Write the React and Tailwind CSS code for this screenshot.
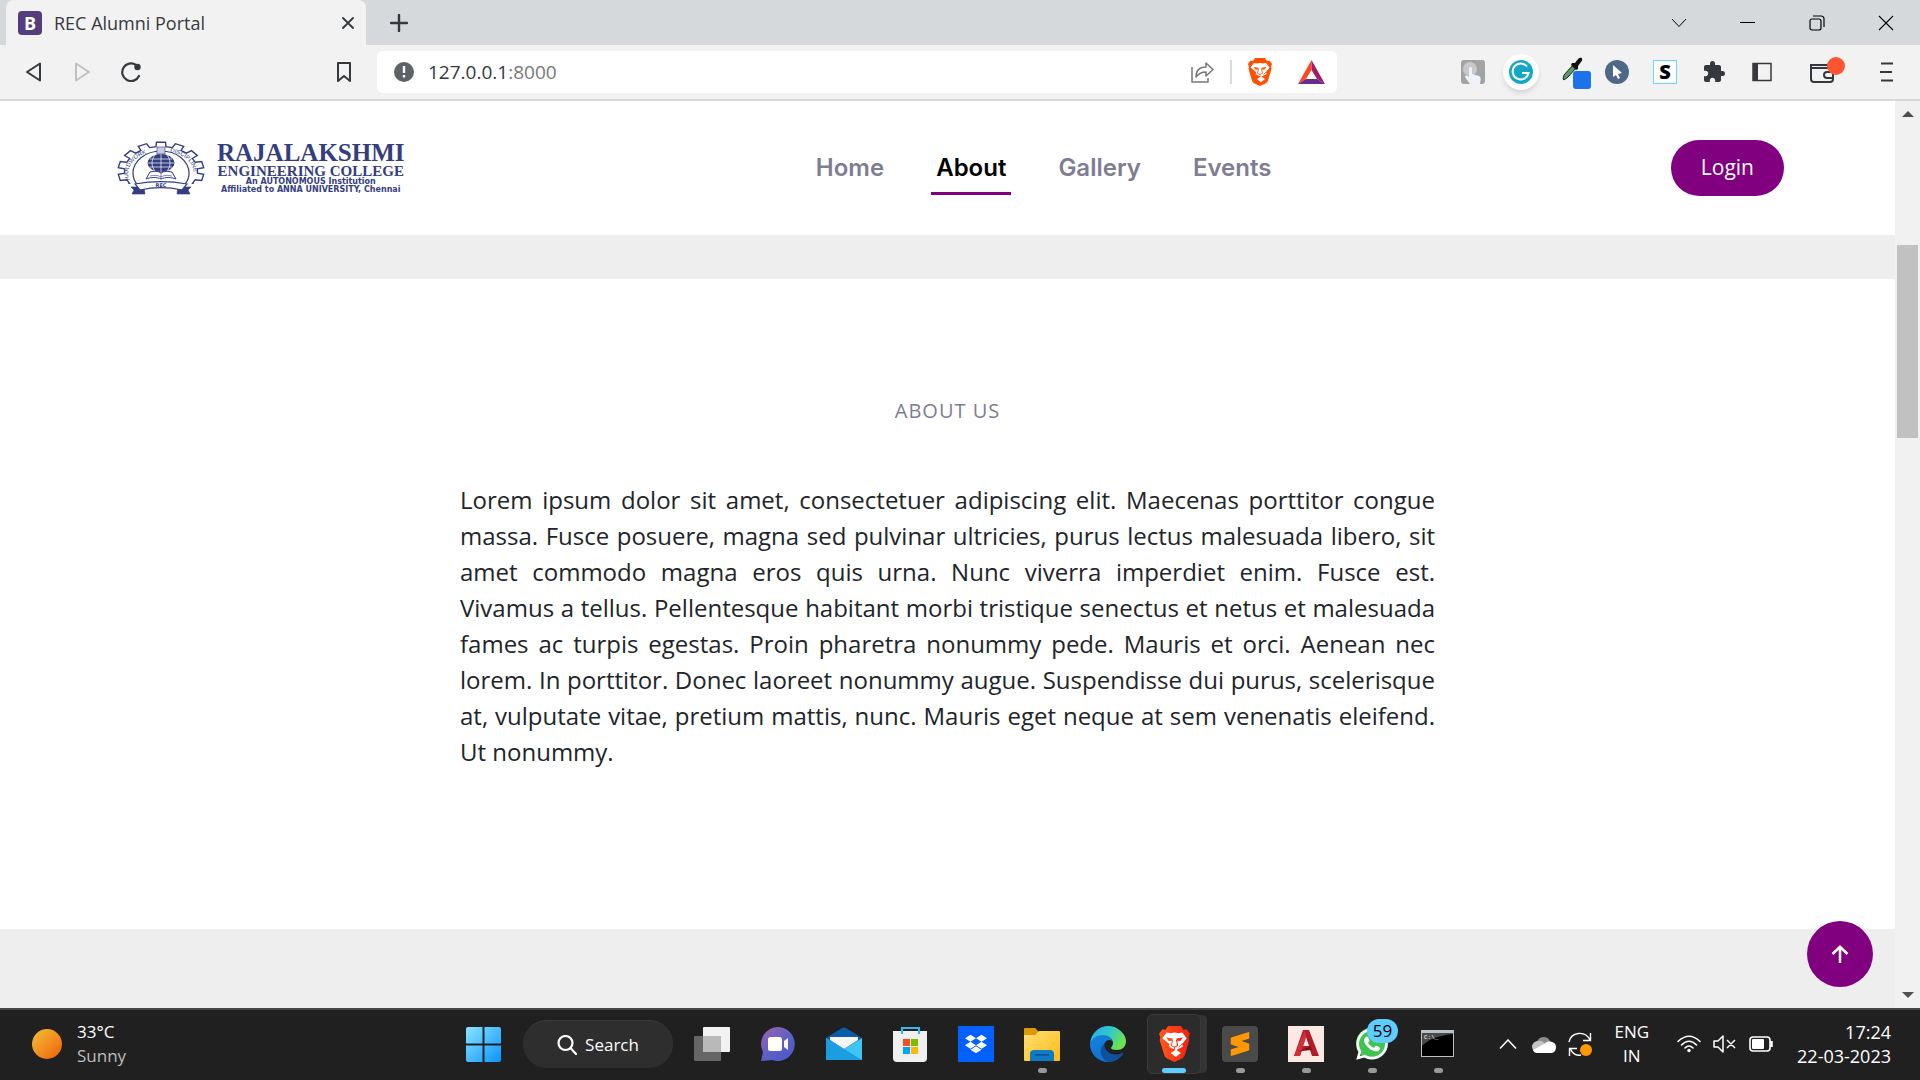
import { SiSublimetext, SiDropbox } from "react-icons/si";
import { FaWhatsapp } from "react-icons/fa";
import { MdExtension } from "react-icons/md";

const GEAR_TEETH = 14;

function gearPath() {
  const pts = [];
  const step = (Math.PI * 2) / GEAR_TEETH;
  for (let i = 0; i < GEAR_TEETH; i++) {
    const mid = -Math.PI / 2 + i * step;
    [
      [-0.3, 0.85],
      [-0.24, 1],
      [0.24, 1],
      [0.3, 0.85],
    ].forEach(([o, r]) => {
      const a = mid + o * step;
      pts.push(`${(44 + Math.cos(a) * 43 * r).toFixed(1)} ${(30 + Math.sin(a) * 29 * r).toFixed(1)}`);
    });
  }
  return `M${pts.join("L")}Z`;
}

function CollegeCrest() {
  return (
    <svg viewBox="0 0 88 54" className="h-[54px] w-[88px] shrink-0" fill="none" stroke="#343d80" aria-hidden="true">
      <defs>
        <clipPath id="crest-top">
          <path d="M0 0H88V43H0Z" />
        </clipPath>
        <path id="arc-left" d="M13 39A31 21.500 0 0 1 36 11" />
        <path id="arc-right" d="M53 11A31 21.500 0 0 1 75 39" />
      </defs>
      <g clipPath="url(#crest-top)">
        <path d={gearPath()} strokeWidth="1.400" />
        <ellipse cx="44" cy="32" rx="28" ry="22" strokeWidth="1.200" />
      </g>
      <g fill="#343d80" stroke="none" fontFamily="Liberation Sans" fontSize="6">
        <text><textPath href="#arc-left">HARDWORK</textPath></text>
        <text><textPath href="#arc-right">DISCIPLINE</textPath></text>
      </g>
      <path d="M40 6h8v7h-8z" fill="#c9cce0" strokeWidth=".6" />
      <ellipse cx="44" cy="22" rx="13" ry="8.500" fill="#343d80" />
      <path d="M31 22h26M33 18h22M33 26h22M44 13v18M38 14c-4 5-4 11 0 16M50 14c4 5 4 11 0 16" stroke="#fff" strokeWidth=".7" />
      <path d="M29 38l4-7c4-1 8-1 11 1 3-2 7-2 11-1l4 7c-5-2-11-2-15 0-4-2-10-2-15 0z" fill="#fff" strokeWidth="1" />
      <path d="M33 35c4-1 8-1 11 1 3-2 7-2 11-1M44 32v6" strokeWidth=".6" />
      <path d="M27 46H14l3 3-2 4h13zM61 46h13l-3 3 2 4H60z" fill="#343d80" strokeWidth=".6" />
      <path d="M18 43c16-3 36-3 52 0l-5 6c-13-3-29-3-42 0z" fill="#fff" strokeWidth="1.200" />
      <text x="44" y="46" textAnchor="middle" fill="#343d80" stroke="none" fontFamily="DejaVu Sans" fontWeight="700" fontSize="5">REC</text>
    </svg>
  );
}

function BraveLion({ className, fill }) {
  return (
    <svg viewBox="0 0 24 28" className={className}>
      <defs>
        <linearGradient id="lion-red"><stop stopColor="#ff5a1c" /><stop offset="1" stopColor="#f51e0f" /></linearGradient>
      </defs>
      <path d="M7 0h10l2 3 2.500-.5L24 6l-1 3 .5 2-3 10c-.5 2-1 3-3 4.500L12 28l-5.500-2.500C4.500 24 4 23 3.500 21L.5 11 1 9 0 6l2.500-3.500L5 3z" fill={fill} />
      <path d="M6 5l3 .6 3-.6 3 .6 3-.6 3.500 4.500-3.500 4.500.5 2.200-4.500 2v.8l3 2-4 3.200-4-3.200 3-2v-.8l-4.500-2 .5-2.200L2.500 9.500z" fill="#fff" />
      <path d="M5.500 9l5 .8v1.600l-3 .2zM18.500 9l-5 .8v1.600l3 .2z" fill={fill} />
      <path d="M10.500 11l-1 4.200 2.500 1.300 2.500-1.300-1-4.200" fill="none" stroke={fill} strokeWidth=".8" />
      <path d="M5.500 13.500l3 3M18.500 13.500l-3 3M12 16.500v2.500" stroke={fill} strokeWidth=".7" />
    </svg>
  );
}

function BrowserTabs() {
  return (
    <div className="flex h-[45px] items-center bg-[#d5d9dc] pl-1.5">
      <div className="flex h-full w-[360px] items-center rounded-t-lg bg-[#f2f2f2] pl-3 pr-3">
        <span className="flex size-6 items-center justify-center rounded bg-[#563d7c] text-lg font-bold leading-6 text-white" aria-hidden="true">B</span>
        <span className="ml-3 flex-1 text-lg text-[#35393d]">REC Alumni Portal</span>
        <button aria-label="Close tab" className="text-[#35393d]">
          <svg viewBox="0 0 12 12" className="size-3" stroke="currentColor" strokeWidth="1.800" strokeLinecap="round"><path d="M1 1l10 10M11 1L1 11" /></svg>
        </button>
      </div>
      <button aria-label="New tab" className="ml-6 text-[#35393d]">
        <svg viewBox="0 0 18 18" className="size-[18px]" stroke="currentColor" strokeWidth="2.400" strokeLinecap="round"><path d="M9 1v16M1 9h16" /></svg>
      </button>
      <div className="ml-auto flex items-center text-black">
        <button aria-label="Search tabs" className="flex w-[69px] justify-center">
          <svg viewBox="0 0 16 10" className="h-2.5 w-4" fill="none" stroke="currentColor"><path d="M1 1l7 7.500L15 1" /></svg>
        </button>
        <button aria-label="Minimize" className="flex w-[69px] justify-center">
          <svg viewBox="0 0 16 2" className="h-0.5 w-4" fill="currentColor"><path d="M0 0h15v1H0z" /></svg>
        </button>
        <button aria-label="Restore" className="flex w-[69px] justify-center">
          <svg viewBox="0 0 16 16" className="size-4" fill="none" stroke="currentColor" strokeWidth="1.200"><rect x="1" y="4" width="11" height="11" rx="2" /><path d="M4 1h8c2 0 3 1 3 3v8" /></svg>
        </button>
        <button aria-label="Close window" className="flex w-[69px] justify-center">
          <svg viewBox="0 0 16 16" className="size-4" stroke="currentColor" strokeWidth="1.100"><path d="M1 1l14 14M15 1L1 15" /></svg>
        </button>
      </div>
    </div>
  );
}

function BrowserToolbar() {
  return (
    <div className="flex h-14 items-center border-b-2 border-[#d5d9dc] bg-[#f2f2f2] text-[#35393d]">
      <div className="flex w-[377px] items-center pl-6 pr-6">
        <button aria-label="Back">
          <svg viewBox="0 0 20 20" className="size-5" fill="none" stroke="currentColor" strokeWidth="2" strokeLinejoin="round"><path d="M16 1.500v17L3 10z" /></svg>
        </button>
        <button aria-label="Forward" className="ml-7 text-[#bfc1c3]">
          <svg viewBox="0 0 20 20" className="size-5" fill="none" stroke="currentColor" strokeWidth="2" strokeLinejoin="round"><path d="M4 1.500v17L17 10z" /></svg>
        </button>
        <button aria-label="Reload" className="ml-7">
          <svg viewBox="0 0 22 20" className="h-5 w-[22px]" fill="none" stroke="currentColor" strokeWidth="2.200" strokeLinecap="round"><path d="M16 3A8.800 8.800 0 1 0 19 14" /><circle cx="17.500" cy="5" r="3.200" fill="currentColor" stroke="none" /></svg>
        </button>
        <button aria-label="Bookmark this page" className="ml-auto">
          <svg viewBox="0 0 18 20" className="h-5 w-[18px]" fill="none" stroke="currentColor" strokeWidth="2" strokeLinejoin="round"><path d="M3 1h12v18l-6-5-6 5z" /></svg>
        </button>
      </div>
      <div className="flex h-[42px] w-1/2 items-center rounded-md bg-white pl-[17px] pr-3">
        <svg viewBox="0 0 20 20" className="size-5" aria-hidden="true"><circle cx="10" cy="10" r="10" fill="#5f6368" /><path d="M8.800 4h2.400v7H8.800zM8.800 13h2.400v2.400H8.800z" fill="#fff" /></svg>
        <span className="ml-3.5 text-[19px] text-[#35393d]">127.0.0.1<span className="text-[#777]">:8000</span></span>
        <button aria-label="Share" className="ml-auto">
          <svg viewBox="0 0 24 22" className="h-[22px] w-6" fill="none" stroke="#777" strokeWidth="1.500" strokeLinejoin="round"><path d="M2 6v15h16v-4" /><path d="M6 16c0-7 4-10 10-10V2l7 6.500-7 6.500v-4c-4 0-7 1-10 5z" /></svg>
        </button>
        <span className="ml-4 h-6 w-0.5 bg-[#ddd]" />
        <button aria-label="Brave Shields" className="ml-4">
          <BraveLion className="h-7 w-6" fill="#ff5000" />
        </button>
        <button aria-label="Brave Rewards" className="ml-[26px]">
          <svg viewBox="0 0 27 24" className="h-6 w-[27px]"><path d="M13.500 0L0 24l8-5 5.500-9z" fill="#ff4724" /><path d="M13.500 0L27 24l-8-5-5.500-9z" fill="#9e1f63" /><path d="M0 24h27l-8-5H8z" fill="#662d91" /></svg>
        </button>
      </div>
      <div className="ml-auto flex items-center pr-[26px]">
        <button aria-label="Tap extension">
          <svg viewBox="0 0 24 24" className="size-6"><rect width="24" height="24" rx="3" fill="#a3a3a3" /><circle cx="9" cy="9" r="7" fill="#c9c9c9" /><path d="M8 9c0-3 3-3 3 0v5l7 2c2 1 2 3 1 8H9l-5-7c0-2 2-2 4 0z" fill="#eef3fa" /></svg>
        </button>
        <button aria-label="Grammarly" className="ml-[18px] flex size-9 items-center justify-center rounded-full bg-white shadow-md">
          <svg viewBox="0 0 24 24" className="size-6"><circle cx="12" cy="12" r="12" fill="#14a8c4" /><path d="M18 6.500A8 8 0 1 0 19.500 13H13" fill="none" stroke="#fff" strokeWidth="2" /></svg>
        </button>
        <button aria-label="Color picker" className="ml-[22px]">
          <svg viewBox="0 0 32 34" className="h-[34px] w-8"><path d="M2 24l1-4 9-10 3 3-8 9-4 3z" fill="#5c9b62" stroke="#222" /><path d="M11 8l3 0 3-4c3-3 6 0 3 3l-3 4 0 3-2 1-5-5z" fill="#111" /><rect x="12" y="16" width="18" height="18" rx="3" fill="#1a73e8" /></svg>
        </button>
        <button aria-label="Cursor extension" className="ml-3">
          <svg viewBox="0 0 24 24" className="size-6"><circle cx="12" cy="12" r="12" fill="#4f6788" /><path d="M8 5l9 8-4 1 2 4-2 1-2-4-3 2z" fill="#fff" /></svg>
        </button>
        <button aria-label="S extension" className="ml-6 flex size-6 items-center justify-center border border-[#6fd3f7] bg-white text-xl font-extrabold leading-5 text-black">S</button>
        <button aria-label="Extensions" className="ml-[25px]"><MdExtension size={24} /></button>
        <button aria-label="Sidebar" className="ml-[26px]">
          <svg viewBox="0 0 20 20" className="size-5"><path fill="none" stroke="currentColor" strokeWidth="1.500" d="M1 1.500h18v17H1z" /><path d="M1 1h5v18H1z" fill="currentColor" /></svg>
        </button>
        <button aria-label="Wallet" className="ml-[37px]">
          <svg viewBox="0 0 36 30" className="h-[30px] w-9" fill="none" stroke="currentColor" strokeWidth="2"><path d="M2 8h19c2 0 3 1 3 3v11c0 2-1 3-3 3H5c-2 0-3-1-3-3zM2 11h20M24 15h-6c-4 0-4 6 0 6h6" /><circle cx="27" cy="9" r="9" fill="#ff5530" stroke="none" /></svg>
        </button>
        <button aria-label="Menu" className="ml-[35px]">
          <svg viewBox="0 0 14 20" className="h-5 w-3.5" stroke="currentColor" strokeWidth="2"><path d="M1 1.500h12M0 10h12M1 18.500h12" /></svg>
        </button>
      </div>
    </div>
  );
}

const NAV = ["Home", "About", "Gallery", "Events"];

function SiteHeader() {
  return (
    <header className="flex h-[134px] items-center justify-between bg-white pl-[117px] pr-[111px]">
      <a href="#home" className="flex items-center gap-3 text-[#343d80]">
        <CollegeCrest />
        <span className="flex flex-col items-center whitespace-nowrap font-['Liberation_Serif',serif] font-bold">
          <span className="text-[25px] leading-[22px]">RAJALAKSHMI</span>
          <span className="text-[15px] leading-[14px]">ENGINEERING COLLEGE</span>
          <span className="font-['DejaVu_Sans',sans-serif] text-[8px] leading-2">An AUTONOMOUS Institution</span>
          <span className="font-['DejaVu_Sans',sans-serif] text-[8px] leading-2">Affiliated to ANNA UNIVERSITY, Chennai</span>
        </span>
      </a>
      <nav className="flex gap-[42px] pl-3 font-['Inter',sans-serif] text-2xl font-semibold leading-8">
        {NAV.map((item) => (
          <a
            key={item}
            href={`#${item.toLowerCase()}`}
            className={item === "About" ? "border-b-[3px] border-[#800080] px-[5px] pb-2 pt-[11px] text-black" : "border-b-[3px] border-transparent px-[5px] pb-2 pt-[11px] text-[#7f7d92]"}
          >
            {item}
          </a>
        ))}
      </nav>
      <button className="h-14 rounded-full bg-[#800080] px-[30px] text-[21px] text-white">Login</button>
    </header>
  );
}

function Scrollbar() {
  return (
    <div className="flex w-[25px] shrink-0 flex-col items-center justify-between bg-[#f1f1f1] py-2.5" aria-hidden="true">
      <svg viewBox="0 0 12 6" className="h-1.5 w-3" fill="#505050"><path d="M6 0l6 6H0z" /></svg>
      <div className="mt-32 mb-auto h-[193px] w-[21px] bg-[#c1c1c1]" />
      <svg viewBox="0 0 12 6" className="h-1.5 w-3" fill="#505050"><path d="M0 0h12L6 6z" /></svg>
    </div>
  );
}

function TaskIcon({ label, running, active, children }) {
  return (
    <button aria-label={label} className={active ? "relative flex h-[60px] w-[54px] flex-col items-center rounded-md border border-[#3a3a3a] bg-[#2c2c2c] pt-[11px] shadow-[7px_0_0_-1px_#343434]" : "relative flex h-[60px] w-[54px] flex-col items-center pt-3"}>
      {children}
      {running && <span className={active ? "mt-1.5 h-[5px] w-6 rounded-full bg-[#60cdff]" : "mt-1.5 h-[5px] w-[9px] rounded-full bg-[#999]"} />}
    </button>
  );
}

function Taskbar() {
  return (
    <footer className="flex h-[72px] items-center border-t-2 border-[#444] bg-[#202020] pb-0.5 text-[17px] leading-6 text-white">
      <div className="flex flex-1 items-center gap-[15px] pl-8">
        <span className="size-[30px] rounded-full bg-linear-to-br from-[#efc034] to-[#f05a08]" />
        <div>
          <p>33°C</p>
          <p className="text-[#bdbdbd]">Sunny</p>
        </div>
      </div>
      <div className="flex items-center gap-3 pl-2">
        <button aria-label="Start" className="mr-2.5">
          <svg viewBox="0 0 35 35" className="size-[35px]">
            <defs><linearGradient id="win" x2="1" y2="1" gradientUnits="objectBoundingBox"><stop stopColor="#8ae4ff" /><stop offset="1" stopColor="#0a94ff" /></linearGradient></defs>
            <path d="M2 0h14.500v16.500H0V2q0-2 2-2zM18.500 0H33q2 0 2 2v14.500H18.500zM0 18.500h16.500V35H2q-2 0-2-2zM18.500 18.500H35V33q0 2-2 2H18.500z" fill="url(#win)" />
          </svg>
        </button>
        <button className="flex h-12 w-[150px] items-center justify-center gap-2 rounded-full border-t border-[#3b3b3b] bg-[#2e2e2e]">
          <svg viewBox="0 0 20 20" className="size-5" fill="none" stroke="currentColor" strokeWidth="2.200" strokeLinecap="round"><circle cx="8.500" cy="8" r="7" /><path d="M13.500 13l5.500 6" /></svg>
          Search
        </button>
        <TaskIcon label="Task View">
          <svg viewBox="0 0 36 36" className="size-9"><rect x="9" y="1" width="27" height="25" rx="1" fill="#f2f2f2" /><rect y="10" width="27" height="25" rx="1" fill="#666" /><path d="M9 10h18v16H9z" fill="#b9b9b9" /></svg>
        </TaskIcon>
        <TaskIcon label="Chat">
          <svg viewBox="0 0 36 36" className="size-9">
            <defs><linearGradient id="chat" x1=".2" y1=".1" x2=".8" y2=".9"><stop stopColor="#8b62b5" /><stop offset=".6" stopColor="#5b5fc7" /><stop offset="1" stopColor="#5059c9" /></linearGradient></defs>
            <path d="M18 1a17 17 0 1 1-6 33L1 35l2-9A17 17 0 0 1 18 1z" fill="url(#chat)" />
            <rect x="8" y="11" width="14" height="14" rx="2.500" fill="#fff" /><path d="M24 15l4-3v12l-4-3z" fill="#fff" />
          </svg>
        </TaskIcon>
        <TaskIcon label="Mail">
          <svg viewBox="0 0 36 36" className="size-9"><path d="M0 12L16 2q2-1 4 0l16 10-18 13z" fill="#0a5ba8" /><path d="M4 11h28v3L18 23 4 14z" fill="#f5f5f5" /><path d="M0 12l18 11L36 12v22H0z" fill="#3ec6f3" /><path d="M0 12l36 22H0z" fill="#1b9de2" /></svg>
        </TaskIcon>
        <TaskIcon label="Microsoft Store">
          <svg viewBox="0 0 36 36" className="size-9"><path d="M1 5h34v27q0 4-4 4H5q-4 0-4-4z" fill="#f0f0f0" /><path d="M10 8V2h17v6" fill="none" stroke="#35b6ee" strokeWidth="2.200" /><path d="M11 13h7v7h-7z" fill="#f25022" /><path d="M19 13h7v7h-7z" fill="#7fba00" /><path d="M11 21h7v7h-7z" fill="#00a4ef" /><path d="M19 21h7v7h-7z" fill="#ffb900" /></svg>
        </TaskIcon>
        <TaskIcon label="Dropbox">
          <span className="flex size-9 items-center justify-center bg-[#0061fe]"><SiDropbox size={22} color="#fff" /></span>
        </TaskIcon>
        <TaskIcon label="File Explorer" running>
          <svg viewBox="0 0 36 36" className="size-9">
            <defs><linearGradient id="folder" x2="1" y2="1"><stop stopColor="#ffdf75" /><stop offset="1" stopColor="#fbbc14" /></linearGradient></defs>
            <path d="M0 3q0-1 1-1h10l4 4v4H0z" fill="#dc9a05" /><path d="M0 9h11l4-4h20q1 0 1 1v28q0 1-1 1H1q-1 0-1-1z" fill="url(#folder)" /><path d="M6 35v-7q0-4 4-4h16q4 0 4 4v7z" fill="#0f7ac6" /><path d="M11 29h14" stroke="#0a4f8c" strokeWidth="1.500" />
          </svg>
        </TaskIcon>
        <TaskIcon label="Microsoft Edge">
          <svg viewBox="0 0 36 36" className="size-9">
            <defs>
              <linearGradient id="edge-a" x2="1" y2=".5"><stop stopColor="#2aa7ee" /><stop offset=".5" stopColor="#30c6cf" /><stop offset="1" stopColor="#6be24f" /></linearGradient>
              <linearGradient id="edge-b" x2=".6" y2="1"><stop stopColor="#1583e0" /><stop offset="1" stopColor="#0d6fd0" /></linearGradient>
            </defs>
            <path d="M0 18C1 7 9 0 18 0c10 0 18 8 18 15 0 6-4 9-9 9-4 0-6-1-6-2s2-2 2-5c0-4-4-7-9-7C7 10 2 13 0 18z" fill="url(#edge-a)" />
            <path d="M0 18C2 12 7 9 13 9c5 0 9 3 9 6-2-2-7-1-8 4-1 6 4 11 11 11 3 0 6-1 8-3-3 6-9 9-15 9C8 36 0 28 0 18z" fill="url(#edge-b)" />
            <path d="M14 18c-5 3-5 14 4 18 6 0 12-3 15-8 0-1 0-2-1-1-8 4-17 0-18-9z" fill="#104f9c" />
          </svg>
        </TaskIcon>
        <TaskIcon label="Brave" running active>
          <BraveLion className="h-9 w-[31px]" fill="url(#lion-red)" />
        </TaskIcon>
        <TaskIcon label="Sublime Text" running>
          <span className="flex size-9 items-center justify-center rounded-sm bg-[#4a4a4a]"><SiSublimetext size={24} color="#ff9800" /></span>
        </TaskIcon>
        <TaskIcon label="AutoCAD" running>
          <svg viewBox="0 0 36 36" className="size-9"><path d="M0 0h36v36H0z" fill="#fbe9e3" /><path d="M15 4h6l10 26h-7l-2-6h-8l-2 6H6z" fill="#b31b25" /><path d="M18 11l3 9h-6z" fill="#fbe9e3" /><path d="M6 30L17 4l1 7-6 19z" fill="#d5303a" /><path d="M10 26l12-6 2 4-10 1z" fill="#7e141b" /></svg>
        </TaskIcon>
        <TaskIcon label="WhatsApp" running>
          <svg viewBox="0 0 36 36" className="size-9"><circle cx="18" cy="17.500" r="16" fill="#3fc351" /><FaWhatsapp size={36} color="#fff" /></svg>
          <span className="absolute left-[22px] top-[5px] h-6 w-[31px] rounded-full bg-[#60cdff] leading-6 text-black">59</span>
        </TaskIcon>
        <TaskIcon label="Command Prompt" running>
          <svg viewBox="0 0 36 36" className="size-9"><path d="M1 4h33v27H1z" fill="#b9c0c6" /><path d="M2 7h31v23H2z" fill="#000" /><path d="M2 7h31v1C16 10 8 14 2 20z" fill="#4a4a4a" /><text x="4" y="13" fill="#fff" fontSize="6" fontFamily="Liberation Mono">C:\_</text></svg>
        </TaskIcon>
      </div>
      <div className="flex flex-1 items-center justify-end pr-[29px]">
        <button aria-label="Show hidden icons"><svg viewBox="0 0 18 10" className="h-2.5 w-[18px]" fill="none" stroke="currentColor" strokeWidth="1.500"><path d="M1 9.500L9 1l8 8.500" /></svg></button>
        <button aria-label="OneDrive" className="ml-[15px]"><svg viewBox="0 0 24 17" className="h-[17px] w-6"><path d="M5 6a7 7 0 0 1 13-1l-6 6z" fill="#8c8c8c" /><path d="M5 5q5-1 8 3l-9 8Q0 15 0 10q1-4 5-5z" fill="#c4c4c4" /><path d="M12 8q4-4 8-2 4 1 4 5 0 5-4 6H5q-3 0-4-3z" fill="#fff" /></svg></button>
        <button aria-label="Updates" className="ml-3"><svg viewBox="0 0 24 24" className="size-6" fill="none" stroke="#fff" strokeWidth="1.400"><path d="M1 10C3 0 17-2 22 8M22.500 1v7.500H15M13 23C8 24 4 21 2 16M1.500 24v-7.500H9" /><circle cx="18" cy="18" r="6" fill="#ff9800" stroke="none" /></svg></button>
        <button className="ml-[22px] text-center">ENG<br />IN</button>
        <button aria-label="Network, volume and battery" className="ml-7 flex items-center gap-3">
          <svg viewBox="0 0 24 18" className="h-[18px] w-6" fill="none" stroke="#fff" strokeWidth="1.600" strokeLinecap="round"><path d="M1 6.500Q12-4 23 6.500M4.500 10Q12 2.500 19.500 10M8 13Q12 9 16 13" /><circle cx="12" cy="15.500" r="1.700" fill="#fff" stroke="none" /></svg>
          <svg viewBox="0 0 24 18" className="h-[18px] w-6" fill="none" stroke="#fff" strokeWidth="1.500" strokeLinejoin="round"><path d="M1 6h4l5-5v16l-5-5H1zM14 5l8 8M22 5l-8 8" /></svg>
          <svg viewBox="0 0 24 16" className="h-4 w-6" fill="none" stroke="#fff" strokeWidth="1.600"><rect x="1" y="1" width="20" height="14" rx="3" /><rect x="3" y="3" width="12" height="10" fill="#fff" stroke="none" rx="1" /><path d="M22.500 5v6" strokeWidth="2.500" /></svg>
        </button>
        <button className="ml-6 text-right text-lg leading-6">17:24<br />22-03-2023</button>
      </div>
    </footer>
  );
}

export default function App() {
  return (
    <div className="flex min-h-screen flex-col bg-white font-['Open_Sans',sans-serif]">
      <BrowserTabs />
      <BrowserToolbar />
      <div className="flex flex-1">
        <div className="relative flex min-w-0 flex-1 flex-col bg-[#eee]">
          <SiteHeader />
          <main id="about" className="mt-11 flex flex-col items-center bg-white px-6 pb-[159px] pt-[118px]">
            <h2 className="text-xl leading-7 tracking-wider text-[#7f7d92]">ABOUT US</h2>
            <p className="mt-[57px] max-w-[975px] text-justify text-2xl leading-9 text-[#212529]">
              Lorem ipsum dolor sit amet, consectetuer adipiscing elit. Maecenas porttitor congue massa. Fusce posuere, magna sed pulvinar ultricies, purus lectus malesuada libero, sit amet commodo magna eros quis urna. Nunc viverra imperdiet enim. Fusce est. Vivamus a tellus. Pellentesque habitant morbi tristique senectus et netus et malesuada fames ac turpis egestas. Proin pharetra nonummy pede. Mauris et orci. Aenean nec lorem. In porttitor. Donec laoreet nonummy augue. Suspendisse dui purus, scelerisque at, vulputate vitae, pretium mattis, nunc. Mauris eget neque at sem venenatis eleifend. Ut nonummy.
            </p>
          </main>
          <button aria-label="Back to top" className="absolute bottom-[21px] right-[22px] flex size-[66px] items-center justify-center rounded-full bg-[#800080]">
            <svg viewBox="0 0 18 18" className="size-[18px]" fill="none" stroke="#fff" strokeWidth="2.500"><path d="M9 18V2M1.500 9L9 1.800 16.500 9" /></svg>
          </button>
        </div>
        <Scrollbar />
      </div>
      <Taskbar />
    </div>
  );
}
